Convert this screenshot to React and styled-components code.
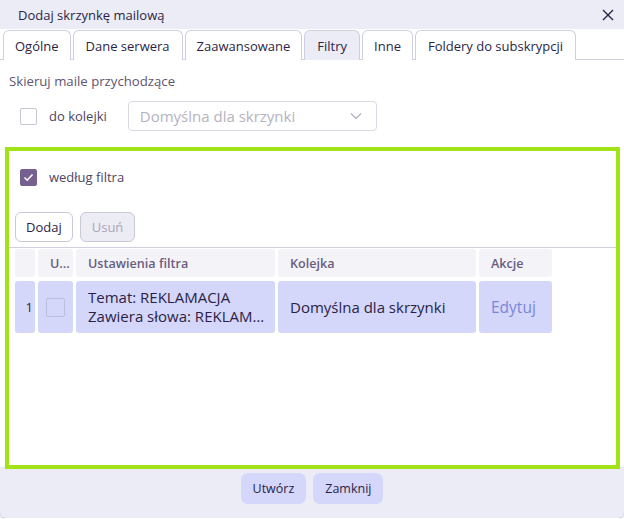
import React from "react";
import styled, { createGlobalStyle } from "styled-components";

const Global = createGlobalStyle`
  html, body { margin: 0; padding: 0; background: #fff; }
  body { font-family: "Open Sans", "DejaVu Sans", sans-serif; }
  * { box-sizing: border-box; }
`;

const Dialog = styled.div`
  width: 624px;
  height: 518px;
  background: #ececf7;
  border-radius: 0 0 6px 6px;
  box-shadow: 0 1px 2px rgba(120, 110, 160, 0.5);
  display: flex;
  flex-direction: column;
  color: #2b1f47;
  font-size: 13px;
  overflow: hidden;
`;

const TitleBar = styled.div`
  height: 29px;
  display: flex;
  align-items: center;
  justify-content: space-between;
  padding: 0 8px 0 18px;
  font-size: 13px;
  color: #2b1f47;
`;

const CloseBtn = styled.button`
  border: 0;
  background: transparent;
  padding: 0;
  width: 16px;
  height: 16px;
  display: flex;
  align-items: center;
  justify-content: center;
  color: #2b1f47;
`;

const TabsBg = styled.div`
  background: #ececf7;
`;

const Tabs = styled.div`
  display: flex;
  gap: 2px;
  padding: 0 0 0 3px;
  height: 31px;
  align-items: flex-end;
  background: #fff;
  border-bottom: 1px solid #cfcfe3;
`;

const Tab = styled.div`
  height: 30px;
  padding: 0 ${(p) => p.$px}px;
  display: flex;
  align-items: center;
  border: 1px solid #cfcfe3;
  border-bottom: 0;
  border-radius: 6px 6px 0 0;
  background: ${(p) => (p.$active ? "#ececf7" : "#fff")};
  font-size: 13px;
  color: #2b1f47;
  margin-bottom: -1px;
`;

const Body = styled.div`
  background: #fff;
  flex: 0 0 auto;
  padding: 11px 4px 0 5px;
  height: 407px;
`;

const SectionLabel = styled.div`
  font-size: 13.2px;
  color: #5f5472;
  padding-left: 4px;
  height: 20px;
  line-height: 20px;
`;

const QueueRow = styled.div`
  display: flex;
  align-items: center;
  padding-left: 15px;
  margin-top: 10px;
  height: 30px;
`;

const Check = styled.span`
  width: ${(p) => p.$size || 17}px;
  height: ${(p) => p.$size || 17}px;
  border-radius: 2px;
  border: 1px solid ${(p) => (p.$checked ? "#76608f" : p.$muted ? "#bcbedf" : "#c7c7d4")};
  background: ${(p) => (p.$checked ? "#76608f" : p.$muted ? "transparent" : "#fff")};
  display: inline-flex;
  align-items: center;
  justify-content: center;
  flex: 0 0 auto;
`;

const CheckLabel = styled.span`
  margin-left: 12px;
  font-size: 13px;
  color: #4f4463;
`;

const Select = styled.div`
  margin-left: 21px;
  width: 249px;
  height: 30px;
  border: 1px solid #d9d9e3;
  border-radius: 4px;
  display: flex;
  align-items: center;
  justify-content: space-between;
  padding: 0 14px 0 11px;
  color: #b5b3c1;
  font-size: 15px;
`;

const FilterBox = styled.div`
  margin-top: 16px;
  border: 4px solid #a2e318;
  height: 322px;
  padding: 16px 0 0 0;
`;

const FilterHead = styled.div`
  display: flex;
  align-items: center;
  padding-left: 11px;
  height: 20px;
`;

const ButtonRow = styled.div`
  display: flex;
  gap: 7px;
  padding-left: 6px;
  margin-top: 25px;
`;

const Btn = styled.button`
  height: 30px;
  padding: 0 ${(p) => p.$px || 10}px;
  border-radius: 6px;
  font-family: inherit;
  font-size: 13px;
  border: 1px solid #c9c9d6;
  background: ${(p) => (p.$disabled ? "#ececf5" : "#fff")};
  color: ${(p) => (p.$disabled ? "#a9a6b8" : "#2b1f47")};
`;

const Divider = styled.div`
  height: 1px;
  background: #cfcfdf;
  margin: 5px 0 0 0;
`;

const Grid = styled.div`
  display: grid;
  grid-template-columns: 20px 35px 199px 198px 73px;
  column-gap: 3px;
  row-gap: 4px;
  padding: 1px 0 0 6px;
`;

const HeadCell = styled.div`
  height: 28px;
  background: #f3f3f8;
  border-radius: 3px;
  display: flex;
  align-items: center;
  padding-left: ${(p) => p.$pl ?? 12}px;
  font-size: 12.6px;
  font-weight: 600;
  color: #6a5e80;
  white-space: nowrap;
  overflow: hidden;
`;

const Cell = styled.div`
  height: 52px;
  background: #d4d6fa;
  border-radius: 3px;
  display: flex;
  align-items: center;
  justify-content: ${(p) => p.$justify || "flex-start"};
  padding: 0 ${(p) => p.$pr ?? 0}px 0 ${(p) => p.$pl ?? 12}px;
  font-size: ${(p) => p.$fs || 15}px;
  color: ${(p) => p.$color || "#2b1f47"};
  line-height: 19px;
  min-width: 0;
`;

const Lines = styled.div`
  min-width: 0;
  white-space: nowrap;
  & > div {
    overflow: hidden;
    text-overflow: ellipsis;
  }
`;

const Footer = styled.div`
  display: flex;
  justify-content: center;
  gap: 7px;
  padding-top: 6px;
`;

const FootBtn = styled.button`
  height: 31px;
  padding: 0 ${(p) => p.$px}px;
  border: 0;
  border-radius: 7px;
  background: #d4d6fa;
  color: #2b1f47;
  font-family: inherit;
  font-size: 12.5px;
`;

const Tick = () => (
  <svg width="11" height="9" viewBox="0 0 11 9">
    <path d="M1.5 4.5 L4.2 7.2 L9.5 1.5" fill="none" stroke="#fff" strokeWidth="1.6" />
  </svg>
);

export default function App() {
  return (
    <>
      <Global />
      <Dialog>
        <TitleBar>
          <span>Dodaj skrzynkę mailową</span>
          <CloseBtn aria-label="close">
            <svg width="12" height="12" viewBox="0 0 12 12">
              <path d="M1 1 L11 11 M11 1 L1 11" stroke="#2b1f47" strokeWidth="1.4" />
            </svg>
          </CloseBtn>
        </TitleBar>
        <TabsBg>
          <Tabs>
            <Tab $px={11}>Ogólne</Tab>
            <Tab $px={12}>Dane serwera</Tab>
            <Tab $px={11}>Zaawansowane</Tab>
            <Tab $px={12} $active>Filtry</Tab>
            <Tab $px={11}>Inne</Tab>
            <Tab $px={12}>Foldery do subskrypcji</Tab>
          </Tabs>
        </TabsBg>
        <Body>
          <SectionLabel>Skieruj maile przychodzące</SectionLabel>
          <QueueRow>
            <Check />
            <CheckLabel>do kolejki</CheckLabel>
            <Select>
              <span>Domyślna dla skrzynki</span>
              <svg width="12" height="8" viewBox="0 0 12 8">
                <path d="M1 1.5 L6 6.5 L11 1.5" fill="none" stroke="#b5b3c1" strokeWidth="1.3" />
              </svg>
            </Select>
          </QueueRow>
          <FilterBox>
            <FilterHead>
              <Check $checked>
                <Tick />
              </Check>
              <CheckLabel>według filtra</CheckLabel>
            </FilterHead>
            <ButtonRow>
              <Btn $px={10}>Dodaj</Btn>
              <Btn $px={11} $disabled>Usuń</Btn>
            </ButtonRow>
            <Divider />
            <Grid>
              <HeadCell $pl={0} />
              <HeadCell $pl={12}>U...</HeadCell>
              <HeadCell>Ustawienia filtra</HeadCell>
              <HeadCell>Kolejka</HeadCell>
              <HeadCell>Akcje</HeadCell>
              <Cell $pl={0} $pr={2} $justify="flex-end" $fs={13}>1</Cell>
              <Cell $pl={8}>
                <Check $muted $size={19} />
              </Cell>
              <Cell $pr={10}>
                <Lines>
                  <div>Temat: REKLAMACJA</div>
                  <div>Zawiera słowa: REKLAMACJA</div>
                </Lines>
              </Cell>
              <Cell>Domyślna dla skrzynki</Cell>
              <Cell $color="#7b86d9" $fs={15.5}>Edytuj</Cell>
            </Grid>
          </FilterBox>
        </Body>
        <Footer>
          <FootBtn $px={12}>Utwórz</FootBtn>
          <FootBtn $px={12}>Zamknij</FootBtn>
        </Footer>
      </Dialog>
    </>
  );
}
